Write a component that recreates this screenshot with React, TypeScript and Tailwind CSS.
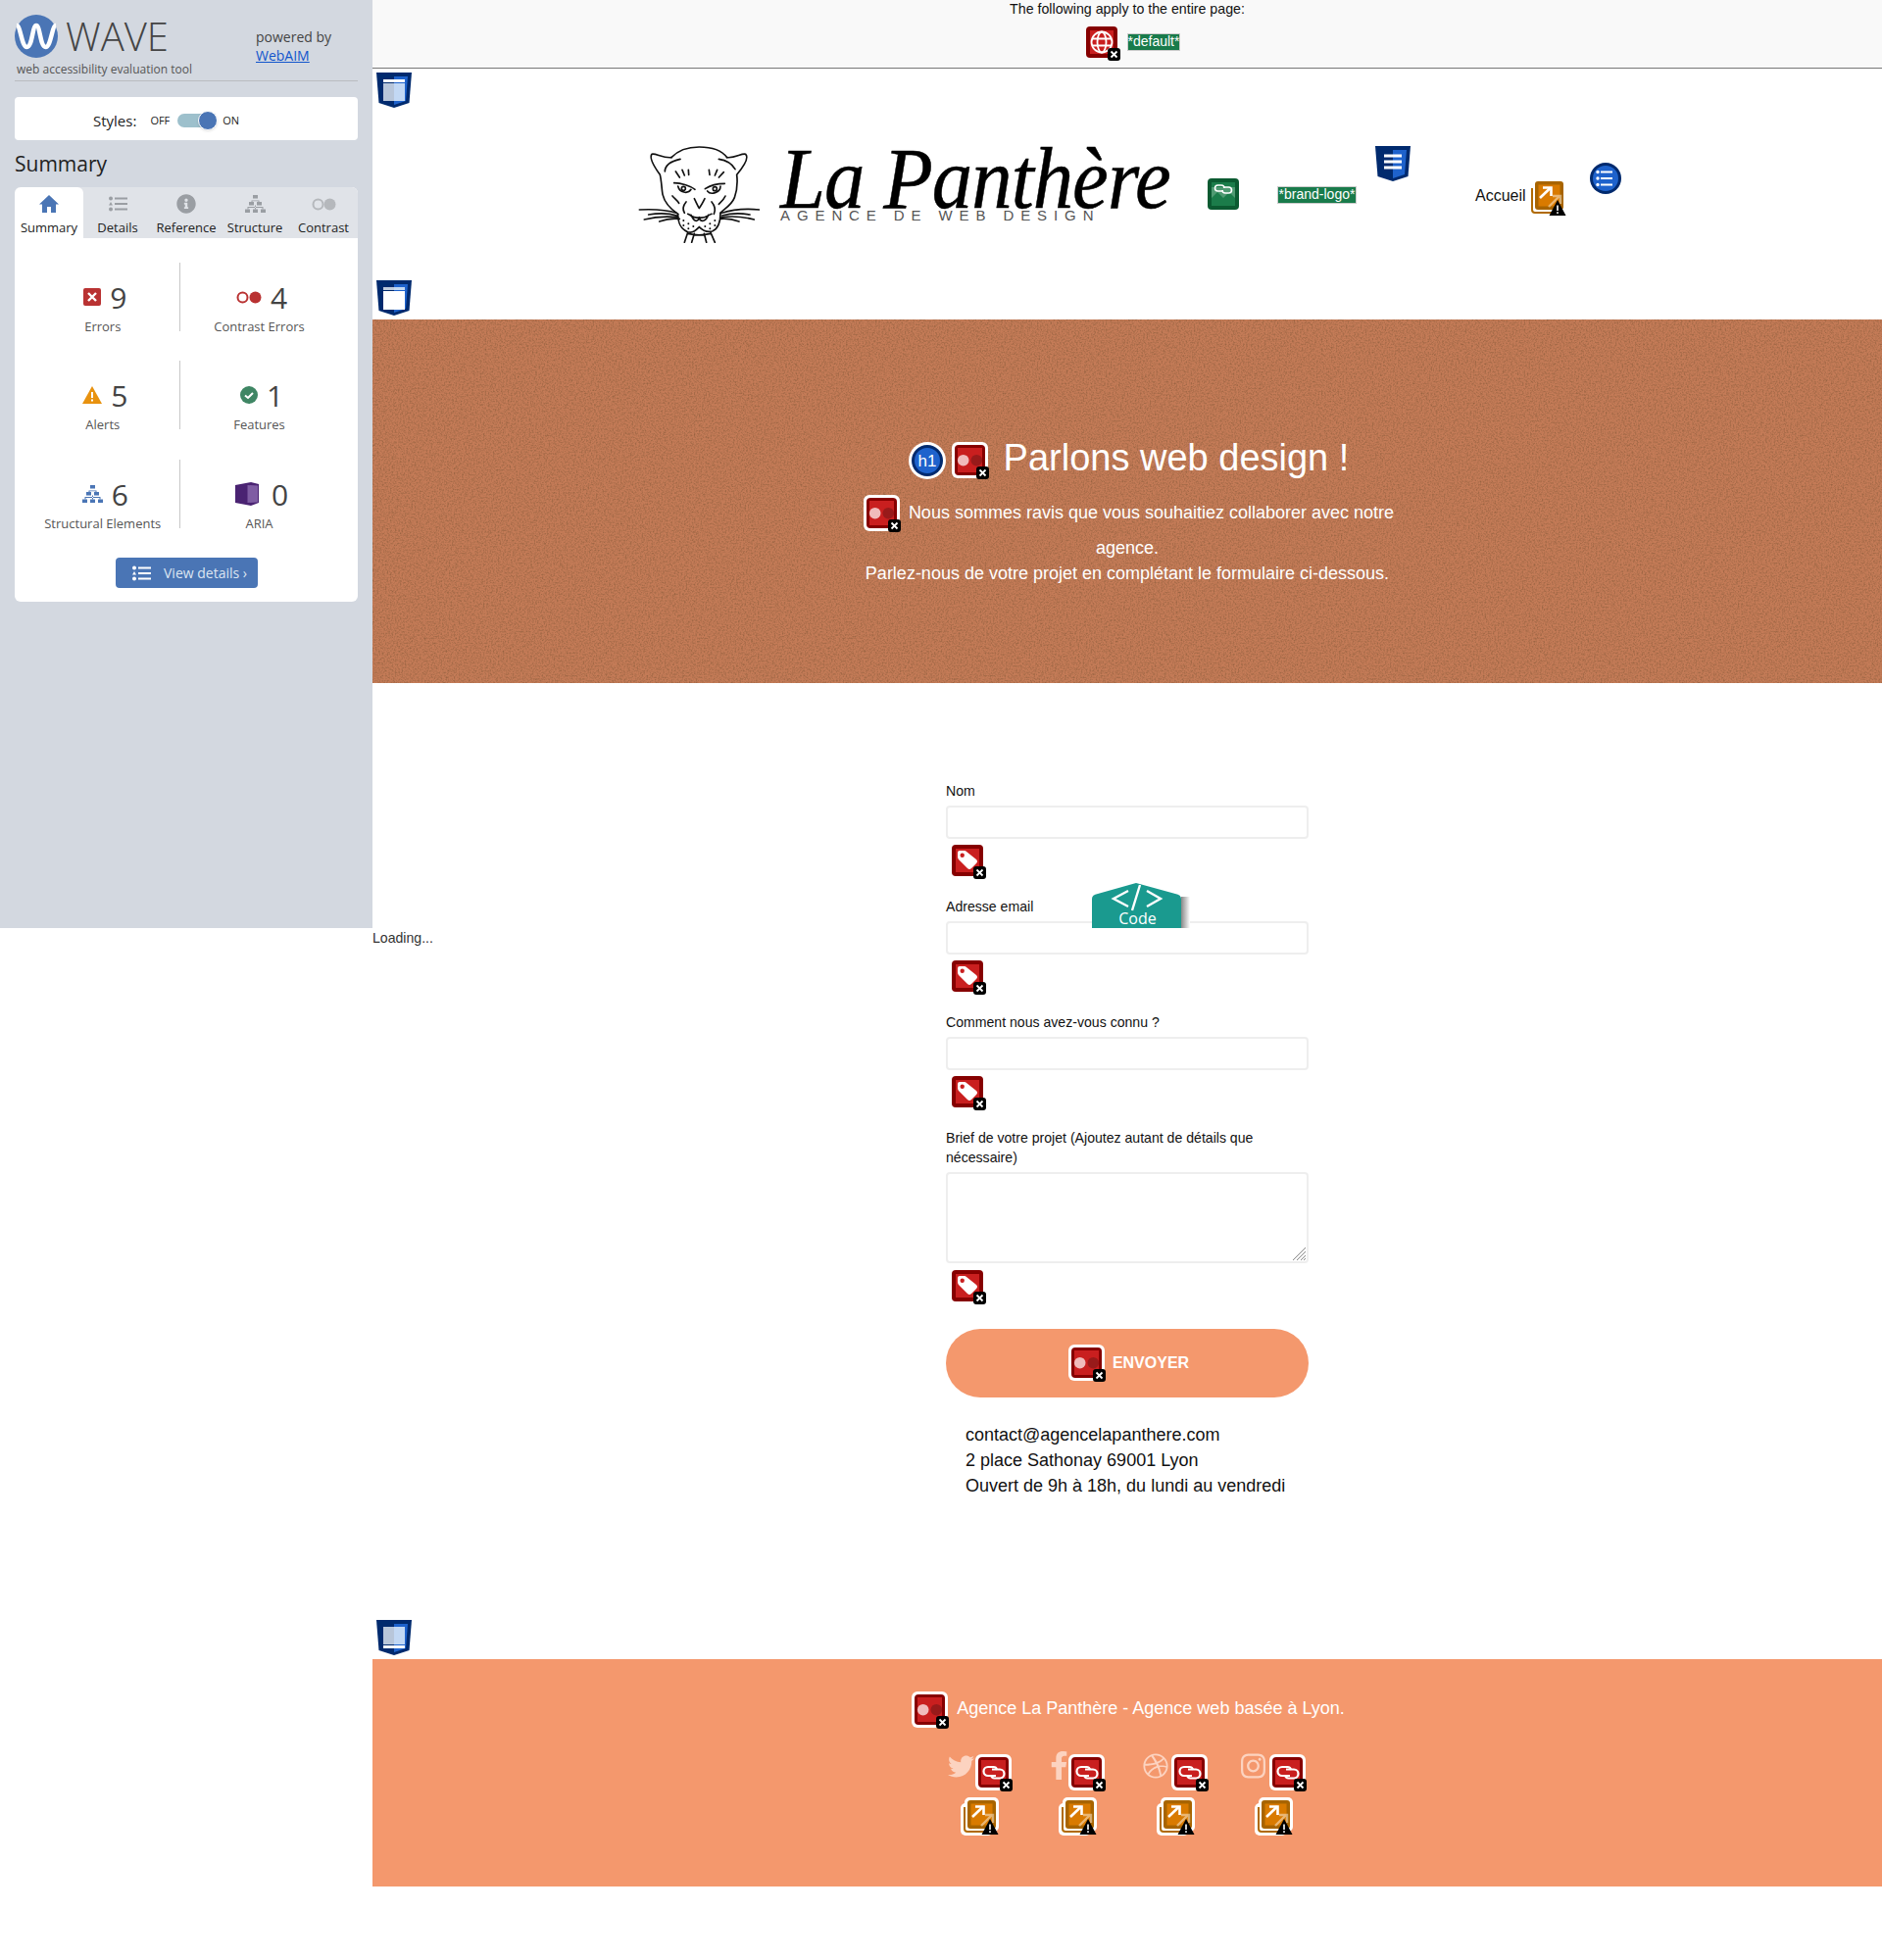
import React from "react";
import { FaInfoCircle, FaTwitter, FaFacebookF, FaDribbble, FaInstagram } from "react-icons/fa";

const Badge = () => (
  <g>
    <rect x="25" y="25" width="13" height="13" rx="3" fill="#000" />
    <path d="M28.5 28.5l6 6M34.5 28.5l-6 6" stroke="#fff" strokeWidth="1.8" />
  </g>
);

// red contrast / link error icon with a white frame
const FramedError = ({ kind = "contrast" }: { kind?: "contrast" | "link" }) => (
  <svg width="38" height="38" viewBox="0 0 38 38" className="shrink-0">
    <rect width="37" height="37" rx="6" fill="#fff" />
    <rect x="3" y="3" width="31" height="31" rx="4" fill="#860000" />
    <rect x="6" y="6" width="25" height="25" fill="#c91f1f" />
    {kind === "contrast" ? (
      <g>
        <circle cx="11.7" cy="18.7" r="5.8" fill="#f0bcbc" />
        <circle cx="25.3" cy="18.7" r="5.8" fill="#981a1a" />
      </g>
    ) : (
      <g fill="none" stroke="#fff" strokeWidth="2.2">
        <path d="M22 16 A3.5 3.5 0 0 0 18.5 13 H13 A4.5 4.5 0 0 0 13 22 H21" />
        <path d="M16 21 A3.5 3.5 0 0 0 19.5 24.5 H25 A4.5 4.5 0 0 0 25 15.5 H17" />
      </g>
    )}
    <Badge />
  </svg>
);

// plain red icons, 32px with the badge hanging over the corner
const PlainError = ({ kind }: { kind: "tag" | "globe" }) => (
  <svg width="35" height="35" viewBox="0 0 35 35" className="shrink-0 overflow-visible">
    <rect width="32" height="32" rx="4" fill="#860000" />
    <rect x="4" y="4" width="24" height="24" fill="#c91f1f" />
    {kind === "tag" ? (
      <g>
        <path d="M6 8 Q6 6 8 6 H13 Q14 6 15 7 L25 15 Q27 17 25 19 L20 24 Q18 26 16 24 L7 15 Q6 14 6 12 Z" fill="#fff" />
        <circle cx="10.7" cy="10.7" r="2.2" fill="#c91f1f" />
      </g>
    ) : (
      <g fill="none" stroke="#fff" strokeWidth="1.8">
        <circle cx="16" cy="16" r="10.5" />
        <ellipse cx="16" cy="16" rx="4.5" ry="10.5" />
        <path d="M6 12.5h20M6 19.5h20" />
      </g>
    )}
    <g transform="translate(-3 -3)">
      <Badge />
    </g>
  </svg>
);

const OrangeAlert = ({ framed = false }: { framed?: boolean }) => (
  <svg width="39" height="39" viewBox="0 0 39 39" className="shrink-0">
    {framed && (
      <g fill="#fff">
        <rect x="4" y="0" width="35" height="35" rx="5" />
        <rect x="0" y="6" width="33" height="33" rx="5" />
      </g>
    )}
    <path d="M4 10 V32 Q4 35 7 35 H30" fill="none" stroke="#b06a00" strokeWidth="2" />
    <rect x="7" y="3" width="29" height="29" rx="3" fill="#a86400" />
    <rect x="10.5" y="6.5" width="22" height="22" fill="#d97a00" />
    <g fill="none" stroke="#fff" strokeWidth="2.6">
      <path d="M12 20 L23 9.5" />
      <path d="M15 9.5 H23.5 V18" />
    </g>
    <g fill="none" stroke="#fff" strokeWidth="2.4" opacity="0.45">
      <path d="M21 29 L32 18" />
      <path d="M25 18 H33 V26" />
    </g>
    <path d="M30 22 L38.5 38 H21.5 Z" fill="#000" />
    <path d="M30 27.5 V33M30 34.2 V36" stroke="#fff" strokeWidth="1.6" />
  </svg>
);

const GreenImage = () => (
  <svg width="32" height="32" viewBox="0 0 32 32" className="shrink-0">
    <rect width="32" height="32" rx="4" fill="#0b5a31" />
    <rect x="4" y="4" width="24" height="24" fill="#4f9a72" />
    <path d="M4 20 L10 14 L16 20 L22 14 L28 20 V28 H4 Z" fill="#1b7c4a" />
    <rect x="4" y="4" width="24" height="5" fill="#1b7c4a" />
    <g fill="none" stroke="#fff" strokeWidth="1.6">
      <path d="M17 10 A3 3 0 0 0 14 7 H10.5 A3 3 0 0 0 10.5 13 H16" />
      <path d="M15 12 A3 3 0 0 0 18 15 H21.5 A3 3 0 0 0 21.5 9 H16" />
    </g>
  </svg>
);

// landmark shield: which band of the inner page is highlighted depends on the kind
const Shield = ({ kind }: { kind: "header" | "main" | "footer" | "nav" }) => (
  <svg width="36" height="36" viewBox="0 0 36 36" className="shrink-0">
    <path d="M0 0 H36 L33.5 31 L18 36 L2.5 31 Z" fill="#002a6e" />
    <path d="M18 4 H32 L30 29 L18 33 Z" fill="#1e62cc" />
    {kind === "nav" && (
      <path d="M9 10h18M9 16h18M9 22h18" stroke="#fff" strokeWidth="3" />
    )}
    {kind === "header" && (
      <g>
        <rect x="7" y="7" width="22" height="3" fill="#fff" />
        <rect x="7" y="11" width="11" height="18" fill="#b8c6da" />
        <rect x="18" y="11" width="11" height="18" fill="#c2d8f4" />
      </g>
    )}
    {kind === "main" && (
      <g>
        <rect x="7" y="7" width="11" height="3" fill="#bfcbdd" />
        <rect x="18" y="7" width="11" height="3" fill="#c2d8f4" />
        <rect x="7" y="11" width="22" height="19" fill="#fff" />
      </g>
    )}
    {kind === "footer" && (
      <g>
        <rect x="7" y="7" width="11" height="18" fill="#b8c6da" />
        <rect x="18" y="7" width="11" height="18" fill="#c2d8f4" />
        <rect x="7" y="26" width="22" height="3" fill="#fff" />
      </g>
    )}
  </svg>
);

const Panther = () => (
  <svg width="124" height="99" viewBox="33 57 372 297" className="shrink-0" fill="none" stroke="#111" strokeWidth="5" strokeLinecap="round">
    <path d="M135 92 C160 65 190 60 220 60 C250 60 285 65 305 92" />
    <path d="M135 92 C110 95 85 78 75 82 C68 90 75 110 100 145 C105 165 105 190 108 205 C115 235 140 255 155 265" />
    <path d="M115 135 C115 120 125 105 162 97" />
    <path d="M305 92 C330 95 350 78 362 82 C372 92 360 115 335 145 C338 170 335 195 328 215 C318 240 295 250 285 262" />
    <path d="M280 97 C300 100 320 110 330 128" />
    <path d="M148 135 L160 153 M168 130 L175 147 M187 130 L188 145 M252 145 L250 130 M268 147 L275 130 M280 153 L295 137" />
    <path d="M143 170 C165 170 195 180 207 190 M155 180 C160 200 185 205 195 190" />
    <path d="M298 172 C275 172 250 180 238 188 M245 195 C255 208 285 200 285 180" />
    <circle cx="172" cy="187" r="6" />
    <circle cx="268" cy="188" r="6" />
    <path d="M205 218 C212 232 218 245 220 247 C226 240 232 228 237 218" />
    <path d="M138 210 C145 218 155 225 158 232 M180 228 C170 240 168 250 175 262 M300 210 C295 222 285 230 280 235 M258 228 C268 240 272 250 265 265" />
    <path d="M185 265 C200 272 205 280 220 275 C235 280 240 272 258 265 M195 268 C205 290 215 290 220 278 C225 290 240 290 248 268" />
    <path d="M155 265 C155 290 160 310 185 320 C200 325 210 315 220 305 C230 315 245 322 260 318 C280 310 285 290 285 262" />
    <path d="M185 322 L175 352 M205 325 L197 352 M235 325 L242 352 M255 322 L268 352 M185 325 C205 330 235 330 255 325" />
    <path d="M37 252 C80 250 120 252 150 262 M65 267 C95 262 125 262 152 270 M52 282 C90 272 125 272 155 275 M98 288 C120 280 140 278 160 280" />
    <path d="M405 252 C360 248 325 250 290 262 M375 267 C345 262 320 262 290 270 M388 282 C350 272 320 270 285 276 M342 288 C320 280 305 278 285 280" />
    <g fill="#111" stroke="none">
      <circle cx="172" cy="285" r="3" /><circle cx="187" cy="295" r="3" /><circle cx="172" cy="300" r="3" /><circle cx="187" cy="310" r="3" /><circle cx="202" cy="303" r="3" />
      <circle cx="268" cy="285" r="3" /><circle cx="253" cy="295" r="3" /><circle cx="268" cy="300" r="3" /><circle cx="253" cy="310" r="3" /><circle cx="238" cy="303" r="3" />
    </g>
  </svg>
);

const ListIcon = ({ color }: { color: string }) => (
  <svg width="19" height="16" viewBox="0 0 19 16" fill={color}>
    <circle cx="2" cy="2.5" r="2" />
    <path d="M2 6 L4 9.5 H0 Z" />
    <circle cx="2" cy="13.5" r="2" />
    <rect x="6" y="1.5" width="13" height="2" />
    <rect x="6" y="7" width="13" height="2" />
    <rect x="6" y="12.5" width="13" height="2" />
  </svg>
);

const TreeIcon = ({ color, w = 21 }: { color: string; w?: number }) => (
  <svg width={w} height={w * 0.86} viewBox="0 0 21 18" fill={color}>
    <rect x="8" y="0" width="5" height="3.5" />
    <rect x="4" y="7" width="5" height="3.5" />
    <rect x="12" y="7" width="5" height="3.5" />
    <rect x="0" y="14.5" width="5" height="3.5" />
    <rect x="8" y="14.5" width="5" height="3.5" />
    <rect x="16" y="14.5" width="5" height="3.5" />
    <path d="M10 3.5v2M6.5 5.5h8v1.5h-1v-.7h-6v.7h-1zM2.5 12h16v2.5h-1v-1.5h-14v1.5h-1zM10 10.5v4h1v-4z" />
  </svg>
);

const tabs = [
  {
    name: "Summary",
    icon: (
      <svg width="20" height="18" viewBox="0 0 20 18" fill="#4a75b5">
        <path d="M10 0 L20 9.5 H17 V18 H12 V12 H8 V18 H3 V9.5 H0 Z" />
      </svg>
    ),
  },
  { name: "Details", icon: <ListIcon color="#9a9ea3" /> },
  { name: "Reference", icon: <FaInfoCircle size={20} color="#9a9ea3" /> },
  { name: "Structure", icon: <TreeIcon color="#9a9ea3" /> },
  {
    name: "Contrast",
    icon: (
      <svg width="25" height="13" viewBox="0 0 25 13">
        <circle cx="6.5" cy="6.5" r="5" fill="none" stroke="#b5b8bc" strokeWidth="2" />
        <circle cx="18.5" cy="6.5" r="6" fill="#b5b8bc" />
      </svg>
    ),
  },
];

const stats = [
  {
    n: "9",
    label: "Errors",
    icon: (
      <svg width="18" height="18" viewBox="0 0 18 18">
        <rect width="18" height="18" rx="2" fill="#b93232" />
        <path d="M5 5l8 8M13 5l-8 8" stroke="#fff" strokeWidth="2.4" />
      </svg>
    ),
  },
  {
    n: "4",
    label: "Contrast Errors",
    icon: (
      <svg width="26" height="13" viewBox="0 0 26 13">
        <circle cx="6.5" cy="6.5" r="5" fill="none" stroke="#b93232" strokeWidth="2" />
        <circle cx="19.5" cy="6.5" r="6" fill="#b93232" />
      </svg>
    ),
  },
  {
    n: "5",
    label: "Alerts",
    icon: (
      <svg width="20" height="18" viewBox="0 0 20 18">
        <path d="M10 0 L20 18 H0 Z" fill="#e8920f" />
        <path d="M10 6v6M10 13.5v2" stroke="#fff" strokeWidth="2" />
      </svg>
    ),
  },
  {
    n: "1",
    label: "Features",
    icon: (
      <svg width="18" height="18" viewBox="0 0 18 18">
        <circle cx="9" cy="9" r="9" fill="#3f8664" />
        <path d="M5 9.5l3 2.5 5-5" fill="none" stroke="#fff" strokeWidth="2" />
      </svg>
    ),
  },
  { n: "6", label: "Structural Elements", icon: <TreeIcon color="#4a75b5" /> },
  {
    n: "0",
    label: "ARIA",
    icon: (
      <svg width="24" height="24" viewBox="0 0 24 24" className="mr-[4px]">
        <path d="M0 3 L16 0 L24 2 V21 L16 24 L0 21 Z" fill="#4a2372" />
        <path d="M12 3 L23 3.5 V20.5 L12 21 Z" fill="#7f5da3" />
        <path d="M12 2 V22" stroke="#4a2372" strokeWidth="1" />
      </svg>
    ),
  },
];

const Sidebar = () => (
  <aside className="w-[380px] h-[947px] shrink-0 bg-[#d3d8e0] px-[15px] pt-[15px] font-['Open_Sans',sans-serif] text-[#333]">
    <div className="flex h-[68px] border-b border-[#b9bcc0]">
      <div className="w-[246px] shrink-0">
        <div className="flex items-center h-[44px]">
          <svg width="44" height="44" viewBox="0 0 44 44" className="shrink-0">
            <circle cx="22" cy="22" r="22" fill="#4a75b5" />
            <path d="M2 11 C6 11 7 33 12.5 33 C18 33 18 11 22 11 C26 11 26 33 31.5 33 C37 33 38 11 42 11" fill="none" stroke="#fff" strokeWidth="4.5" />
          </svg>
          <span className="ml-[8px] text-[40px] leading-[44px] font-light text-[#444]">WAVE</span>
        </div>
        <div className="ml-[2px] mt-[3px] text-[12px] leading-[18px] text-[#555]">web accessibility evaluation tool</div>
      </div>
      <div className="pt-[13px] text-[14px] leading-[19px] text-[#444]">
        <div>powered by</div>
        <a className="text-[#1155cc] underline">WebAIM</a>
      </div>
    </div>
    <div className="mt-[16px] h-[44px] rounded-[4px] bg-white flex items-center pl-[80px] pt-[4px]">
      <span className="text-[15px] text-[#222]">Styles:</span>
      <span className="ml-[14px] text-[11px] text-[#222]">OFF</span>
      <div className="relative ml-[8px] w-[39px] h-[14px] rounded-full bg-[#9dc0cc]">
        <div className="absolute right-[-2px] top-[-3px] w-[20px] h-[20px] rounded-full bg-[#4a75b5] border border-white shadow" />
      </div>
      <span className="ml-[7px] text-[11px] text-[#222]">ON</span>
    </div>
    <h2 className="mt-[10px] text-[21px] leading-[28px] text-[#222]">Summary</h2>
    <div className="mt-[10px] rounded-[6px] bg-white overflow-hidden h-[423px]">
      <div className="flex h-[52px] bg-[#e0e3e8]">
        {tabs.map((t, i) => (
          <div key={t.name} className={`w-[70px] flex flex-col items-center ${i === 0 ? "bg-white rounded-t-[6px]" : ""}`}>
            <div className="h-[32px] flex items-center justify-center pt-[2px]">{t.icon}</div>
            <div className="text-[13px] leading-[18px] text-[#222] whitespace-nowrap">{t.name}</div>
          </div>
        ))}
      </div>
      <div className="grid grid-cols-[168.5px_1fr] gap-y-[30px] pt-[25px]">
        {stats.map((s, i) => (
          <div key={s.label} className={`h-[70px] flex flex-col items-center pt-[15px] ${i >= 4 ? "mt-[1px]" : ""} ${i % 2 === 0 ? "pl-[12px] border-r border-[#c8c8c8]" : "w-[162px]"}`}>
            <div className="flex items-center gap-[9px] h-[40px] ml-[5px] text-[30px] text-[#444]">
              {s.icon}
              <span>{s.n}</span>
            </div>
            <div className="mt-[1px] text-[13px] leading-[18px] text-[#555] whitespace-nowrap">{s.label}</div>
          </div>
        ))}
      </div>
      <div className="mt-[30px] ml-[103px] w-[145px] h-[31px] rounded-[4px] bg-[#4a75b5] flex items-center pl-[17px]">
        <ListIcon color="#fff" />
        <span className="ml-[13px] text-[14px] text-[#dde6f2]">View details ›</span>
      </div>
    </div>
  </aside>
);

const Field = ({ label, area }: { label: React.ReactNode; area?: boolean }) => (
  <div className="mb-[21px]">
    <label className="block text-[14.1px] leading-[20px] text-[#111]">{label}</label>
    {area ? (
      <div className="relative mt-[5px]">
        <textarea className="block w-full h-[93px] rounded-[4px] border-2 border-[#eeeeee] bg-white resize-none" />
        <svg width="15" height="15" viewBox="0 0 15 15" className="absolute right-[2px] bottom-[2px]" stroke="#888" strokeWidth="1">
          <path d="M1 14 L14 1 M5 14 L14 5 M9 14 L14 9 M12 14 L14 12" />
        </svg>
      </div>
    ) : (
      <input className="block mt-[5px] w-full h-[34px] rounded-[4px] border-2 border-[#eeeeee] bg-white" />
    )}
    <div className={`${area ? "mt-[7px]" : "mt-[6px]"} ml-[6px] h-[32px]`}>
      <PlainError kind="tag" />
    </div>
  </div>
);

const socials = [
  { box: "w-[30px]", top: "mt-[-1px]", icon: <FaTwitter size={27} /> },
  { box: "w-[19px]", top: "mt-[-3px]", icon: <FaFacebookF size={29} /> },
  { box: "w-[29px] pr-[3px]", top: "mt-[-1px]", icon: <FaDribbble size={26} /> },
  { box: "w-[29px] pr-[4px]", top: "mt-[-3px]", icon: <FaInstagram size={30} /> },
];

const Main = () => (
  <main className="w-[1540px] shrink-0 text-[#111]">
    <div className="h-[70px] bg-[#f9f9f9] border-b border-[#777] flex flex-col items-center">
      <p className="text-[14.2px] leading-[18px]">The following apply to the entire page:</p>
      <div className="flex ml-[12px] mt-[9px]">
        <PlainError kind="globe" />
        <span className="ml-[7px] mt-[7px] h-[18px] bg-[#197b4b] border border-[#ccc] text-white text-[14px] leading-[15px]">*default*</span>
      </div>
    </div>

    <header className="h-[256px] pt-[4px] pl-[4px]">
      <Shield kind="header" />
      <div className="flex mt-[39px] ml-[267px] h-[99px] items-start">
        <Panther />
        <div className="ml-[21px] pt-[5px] w-[398px] shrink-0 overflow-visible whitespace-nowrap">
          <div className="origin-left scale-x-[0.94] font-['Liberation_Serif',serif] italic text-[88px] leading-[58px] tracking-[-1px] text-black [-webkit-text-stroke:0.5px_black]">La Panthère</div>
          <div className="mt-[2px] text-[15px] leading-[11px] tracking-[6.9px] text-[#555]">AGENCE DE WEB DESIGN</div>
        </div>
        <div className="ml-[38px] mt-[33px]"><GreenImage /></div>
        <span className="ml-[39px] mt-[41px] w-[81px] h-[18px] shrink-0 bg-[#197b4b] border border-[#ccc] text-white text-[14px] leading-[15px] text-center whitespace-nowrap">*brand-logo*</span>
        <div className="ml-[19px]"><Shield kind="nav" /></div>
        <span className="ml-[66px] mt-[41px] text-[16px] leading-[20px] shrink-0">Accueil</span>
        <div className="ml-[2px] mt-[33px]"><OrangeAlert /></div>
        <div className="ml-[24px] mt-[17px]">
          <svg width="32" height="32" viewBox="0 0 32 32">
            <circle cx="16" cy="16" r="16" fill="#002a6e" />
            <circle cx="16" cy="16" r="13" fill="#1e62cc" />
            <path d="M11 9.5h12M11 16h12M11 22.5h12" stroke="#fff" strokeWidth="2.2" />
            <g fill="#fff"><circle cx="8" cy="9.5" r="1.7" /><circle cx="8" cy="16" r="1.7" /><circle cx="8" cy="22.5" r="1.7" /></g>
          </svg>
        </div>
      </div>
      <div className="mt-[38px]"><Shield kind="main" /></div>
    </header>

    <section className="relative h-[371px] bg-[#c47b57] overflow-hidden text-white pt-[125px]">
      <svg className="absolute inset-0 w-full h-full" aria-hidden="true">
        <filter id="grain">
          <feTurbulence type="fractalNoise" baseFrequency="0.6" numOctaves="3" seed="4" />
          <feColorMatrix values="0 0 0 0 0.3  0 0 0 0 0.12  0 0 0 0 0.05  0 0 0 1.8 -0.72" />
        </filter>
        <rect width="100%" height="100%" filter="url(#grain)" />
      </svg>
      <div className="relative flex flex-col items-center">
        <div className="flex items-center h-[38px] ml-[3px]">
          <svg width="38" height="38" viewBox="0 0 38 38" className="shrink-0">
            <circle cx="19" cy="19" r="19" fill="#fff" />
            <circle cx="19" cy="19" r="16" fill="#002a6e" />
            <circle cx="19" cy="19" r="13" fill="#1e62cc" />
            <text x="19" y="25" textAnchor="middle" fontSize="17" fill="#fff" fontFamily="Liberation Sans, sans-serif">h1</text>
          </svg>
          <div className="ml-[6px]"><FramedError /></div>
          <h1 className="ml-[15px] mt-[-6px] text-[38px] leading-[38px] whitespace-nowrap">Parlons web design !</h1>
        </div>
        <div className="flex items-center h-[38px] mt-[16px] ml-[3px] text-[18px]">
          <FramedError />
          <span className="ml-[8px] mt-[-2px]">Nous sommes ravis que vous souhaitiez collaborer avec notre</span>
        </div>
        <div className="mt-[3px] text-[18px] leading-[26px]">agence.</div>
        <div className="text-[18px] leading-[26px]">Parlez-nous de votre projet en complétant le formulaire ci-dessous.</div>
      </div>
    </section>

    <section className="h-[996px] pt-[100px]">
      <form className="w-[370px] mx-auto">
        <Field label="Nom" />
        <Field label="Adresse email" />
        <Field label="Comment nous avez-vous connu ?" />
        <Field area label="Brief de votre projet (Ajoutez autant de détails que nécessaire)" />
        <button type="button" className="mt-[28px] w-full h-[70px] rounded-full bg-[#f4986d] pl-[3px] text-white text-[16px] font-bold flex items-center justify-center">
          <FramedError />
          <span className="ml-[7px]">ENVOYER</span>
        </button>
        <div className="mt-[25px] pl-[20px] text-[18px] leading-[26px]">
          <div>contact@agencelapanthere.com</div>
          <div>2 place Sathonay 69001 Lyon</div>
          <div>Ouvert de 9h à 18h, du lundi au vendredi</div>
        </div>
      </form>
      <div className="mt-[124px] ml-[4px]"><Shield kind="footer" /></div>
    </section>

    <footer className="h-[232px] bg-[#f4986d] pt-[33px]">
      <div className="flex items-center justify-center h-[38px] pl-[2px] text-white text-[18px]">
        <FramedError />
        <span className="ml-[8px] mt-[-4px]">Agence La Panthère - Agence web basée à Lyon.</span>
      </div>
      <div className="grid grid-cols-4 w-[400px] ml-[569px] mt-[26px]">
        {socials.map((s, i) => (
          <div key={i} className="flex flex-col items-center">
            <div className="flex items-start h-[38px] text-[#fcd3c0]">
              <span className={`${s.box} ${s.top} flex justify-center`}>{s.icon}</span>
              <FramedError kind="link" />
            </div>
            <div className="mt-[6px]"><OrangeAlert framed /></div>
          </div>
        ))}
      </div>
    </footer>
  </main>
);

export default function App() {
  return (
    <div className="relative w-[1920px] h-[2000px] flex items-start bg-white font-['Liberation_Sans',sans-serif]">
      <Sidebar />
      <Main />
      <div className="absolute left-[380px] top-[948px] text-[14.1px] leading-[18px] text-[#333]">Loading...</div>
      {/* code tab sits over the page, clipped at the bottom of the sidebar frame */}
      <div className="absolute left-[1114px] top-[901px] w-[100px] h-[46px] overflow-hidden font-['Open_Sans',sans-serif] text-white">
        <svg width="100" height="46" viewBox="0 0 100 46" className="absolute inset-0">
          <defs>
            <linearGradient id="codeshade" x1="0" x2="1" y1="0" y2="0">
              <stop offset="0" stopColor="#888" />
              <stop offset="1" stopColor="#fff" />
            </linearGradient>
          </defs>
          <rect x="91" y="14" width="9" height="32" fill="url(#codeshade)" />
          <path d="M0 16 Q0 12 6 11 L45 0 L85 11 Q91 12 91 16 V46 H0 Z" fill="#1a9a8f" />
          <path d="M37 8 L22 16 L37 24 M56 8 L70 16 L56 24 M49 2 L41 28" fill="none" stroke="#fff" strokeWidth="2.4" />
        </svg>
        <div className="absolute left-0 w-[93px] top-[26px] text-center text-[16px] leading-[20px]">Code</div>
      </div>
    </div>
  );
}
